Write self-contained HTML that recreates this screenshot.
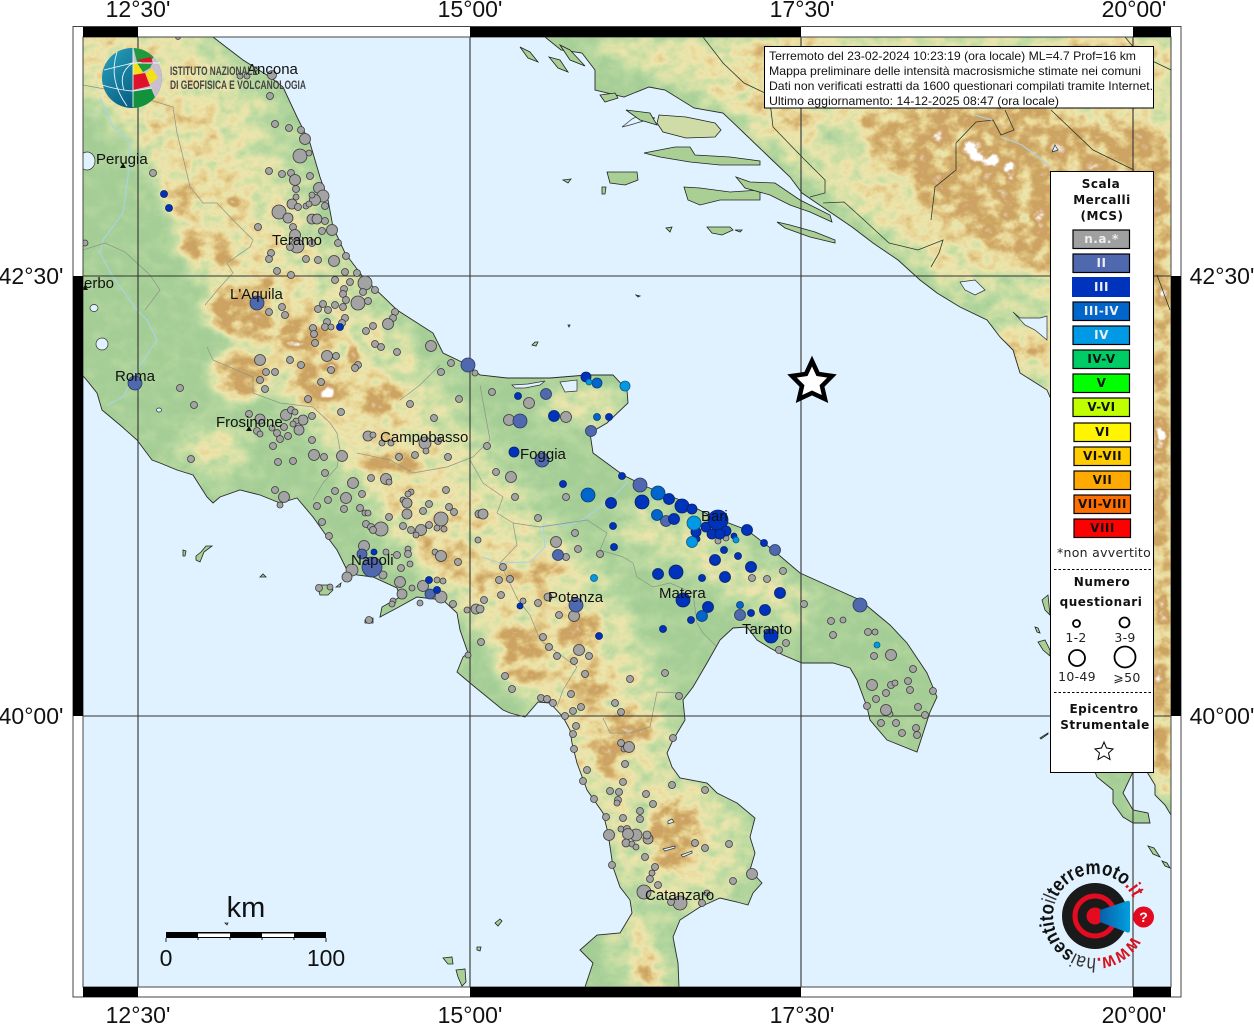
<!DOCTYPE html>
<html lang="it"><head><meta charset="utf-8"><title>Mappa intensità macrosismiche</title>
<style>html,body{margin:0;padding:0;background:#fff}svg{display:block}
.city{font:15px "Liberation Sans",sans-serif;fill:#111}
.ax{font:23px "Liberation Sans",sans-serif;fill:#111;text-anchor:middle}
.info{font:12px "Liberation Sans",sans-serif;fill:#111}
.lb{font:bold 12px "DejaVu Sans",sans-serif;fill:#111;text-anchor:middle;letter-spacing:.5px}
.lr{font:12.5px "DejaVu Sans",sans-serif;fill:#222;text-anchor:middle;letter-spacing:.3px}
.sw{stroke:#000;stroke-width:1.2}
.g circle{fill:#a3a3a3;stroke:#3c3c3c;stroke-width:.8}
.d2 circle{fill:#4f68ae;stroke:#2c3a60;stroke-width:.8}
.d3 circle{fill:#0033bb;stroke:#0b1f66;stroke-width:.8}
.d34 circle{fill:#0066cc;stroke:#103a70;stroke-width:.8}
.d4 circle{fill:#0099e6;stroke:#10587f;stroke-width:.8}
.rg{fill:none;stroke:#8b9686;stroke-width:.7}
.nb{fill:none;stroke:#2b3a2b;stroke-width:.8}
.rv{fill:none;stroke:#a8d3e6;stroke-width:1.1}
.lk{fill:#e0f2ff;stroke:#333;stroke-width:.7}
.il{fill:#a9cf95;stroke:#222;stroke-width:.8}
</style></head><body>
<svg width="1254" height="1024" viewBox="0 0 1254 1024" xmlns="http://www.w3.org/2000/svg">
<defs>
<clipPath id="mapc"><rect x="83" y="37" width="1088" height="950"/></clipPath>
<clipPath id="globe"><circle cx="132" cy="78" r="30"/></clipPath>
<clipPath id="land">
<path id="it" d="M83 37L213 37L243 60L270 77L283 87L297 117L310 143L320 177L328 200L333 227L345 253L363 277L397 310L433 333L443 353L468 365L480 375L507 378L550 378L587 375L613 375L627 390L628 403L607 423L590 433L593 453L623 475L647 487L680 500L713 517L747 530L773 550L800 573L820 582L860 600L890 625L907 643L927 673L937 697L930 712L917 752L887 740L870 720L867 707L857 680L850 668L833 663L802 663L783 655L770 648L757 640L747 627L733 628L720 640L707 663L693 687L683 700L685 720L673 740L667 753L672 767L680 778L707 783L717 793L737 803L755 818L750 837L755 853L750 870L762 883L753 893L748 905L737 902L720 898L700 907L680 920L673 937L678 963L679 987L585 987L593 963L580 950L597 935L620 933L632 913L630 900L620 887L613 867L608 833L603 813L587 790L577 763L572 743L570 730L563 717L550 703L538 702L525 717L510 713L503 710L470 683L457 672L463 657L468 653L460 630L457 613L443 600L417 597L397 608L380 617L382 607L400 597L397 588L373 577L357 575L347 570L337 550L328 538L313 517L297 498L280 503L260 495L240 490L220 497L213 503L207 497L193 475L177 470L160 463L152 460L137 440L120 425L102 410L97 393L85 378L83 376Z"/>
<path id="hr" d="M545 37L561 50L582 53L595 70L595 90L624 97L649 87L665 90L694 108L723 113L744 133L769 157L790 177L802 193L827 210L852 227L873 243L898 260L920 280L937 293L960 307L987 320L1000 337L1013 350L1020 373L1047 390L1060 420L1153 600L1147 772L1155 785L1155 795L1165 805L1171 815L1171 37Z"/>
<path id="cf" d="M1095 772L1133 772L1123 793L1133 810L1148 813L1150 823L1133 823L1123 817L1113 803L1113 790L1097 777Z"/>
</clipPath>
<filter id="b14" x="-20%" y="-20%" width="140%" height="140%" color-interpolation-filters="sRGB"><feGaussianBlur stdDeviation="14"/></filter>
<filter id="b5" x="-30%" y="-30%" width="160%" height="160%" color-interpolation-filters="sRGB"><feGaussianBlur stdDeviation="6"/></filter>
<filter id="b2" x="-60%" y="-60%" width="220%" height="220%" color-interpolation-filters="sRGB"><feGaussianBlur stdDeviation="3"/></filter>
<filter id="hyp" filterUnits="userSpaceOnUse" x="83" y="37" width="1088" height="950" color-interpolation-filters="sRGB">
<feTurbulence type="fractalNoise" baseFrequency="0.06 0.07" numOctaves="4" seed="11" result="t"/>
<feColorMatrix in="t" type="matrix" values="1 0 0 0 0 1 0 0 0 0 1 0 0 0 0 0 0 0 0 1" result="n"/>
<feComposite in="SourceGraphic" in2="n" operator="arithmetic" k1="1.1" k2=".42" k3=".08" k4="-.04" result="h"/>
<feComponentTransfer in="h">
<feFuncR type="table" tableValues=".63 .65 .72 .83 .93 .91 .85 .80 .81 .88 1"/>
<feFuncG type="table" tableValues=".80 .81 .85 .88 .90 .83 .72 .64 .64 .77 1"/>
<feFuncB type="table" tableValues=".58 .59 .63 .65 .68 .58 .46 .38 .40 .62 1"/>
<feFuncA type="linear" slope="0" intercept="1"/>
</feComponentTransfer>
</filter>
<linearGradient id="gb" x1="0" y1="0" x2="1" y2="1"><stop offset="0" stop-color="#2aa3bf"/><stop offset=".6" stop-color="#0d6a8f"/><stop offset="1" stop-color="#084560"/></linearGradient>
<linearGradient id="cone" x1="0" y1="0" x2="1" y2="0"><stop offset="0" stop-color="#0b5ea8"/><stop offset="1" stop-color="#00a0e0"/></linearGradient>
<path id="arc" d="M1132 936A42 42 0 1 1 1133 898"/>
</defs>

<rect x="83" y="37" width="1088" height="950" fill="#e0f2ff"/>
<g clip-path="url(#mapc)">
<g clip-path="url(#land)">
<g filter="url(#hyp)">
<rect x="83" y="37" width="1088" height="950" fill="#1c1c1c"/>
<g filter="url(#b14)" fill="none" stroke-linecap="round" stroke-linejoin="round">
<polyline stroke="#565656" stroke-width="130" points="60,20 150,60 230,160 270,270 340,350 400,440 470,530 560,620 600,700 620,790 690,850"/>
<polyline stroke="#707070" stroke-width="80" points="110,50 190,140 230,240 290,340 370,430 440,520 510,600 580,680 605,740"/>
<polyline stroke="#5a5a5a" stroke-width="45" points="640,530 700,550 790,605"/>
<polyline stroke="#666" stroke-width="40" points="630,925 650,985"/>
<path fill="#707070" stroke="none" d="M570 37L1171 37L1171 830L1150 770L1070 420L1000 340L930 270L840 200L770 145L690 85L620 60Z"/>
<ellipse cx="582" cy="408" rx="44" ry="14" fill="#7a7a7a" stroke="none"/>
<ellipse cx="110" cy="70" rx="35" ry="28" fill="#6c6c6c" stroke="none"/>
<ellipse cx="290" cy="130" rx="28" ry="35" fill="#2c2c2c" stroke="none"/>
<ellipse cx="215" cy="450" rx="35" ry="22" fill="#6c6c6c" stroke="none"/>
<ellipse cx="1005" cy="300" rx="48" ry="24" fill="#383838" stroke="none"/>
<ellipse cx="838" cy="140" rx="24" ry="22" fill="#303030" stroke="none"/>
</g>
<g filter="url(#b5)" fill="#a8a8a8">
<ellipse cx="205" cy="250" rx="30" ry="13" transform="rotate(20 205 250)"/>
<ellipse cx="178" cy="200" rx="10" ry="28" transform="rotate(-20 178 200)"/>
<ellipse cx="240" cy="312" rx="36" ry="24"/>
<ellipse cx="240" cy="375" rx="28" ry="26"/>
<ellipse cx="320" cy="385" rx="30" ry="22"/>
<ellipse cx="300" cy="335" rx="36" ry="16"/>
<ellipse cx="382" cy="398" rx="20" ry="18"/>
<ellipse cx="390" cy="462" rx="30" ry="11" transform="rotate(15 390 462)"/>
<ellipse cx="445" cy="556" rx="26" ry="11" transform="rotate(25 445 556)"/>
<ellipse cx="487" cy="580" rx="10" ry="14"/>
<ellipse cx="540" cy="572" rx="32" ry="8"/>
<ellipse cx="588" cy="630" rx="13" ry="18"/>
<ellipse cx="518" cy="638" rx="20" ry="15"/>
<ellipse cx="522" cy="665" rx="24" ry="18"/>
<ellipse cx="567" cy="632" rx="16" ry="16"/>
<ellipse cx="587" cy="688" rx="20" ry="16"/>
<ellipse cx="628" cy="725" rx="30" ry="14"/>
<ellipse cx="608" cy="753" rx="14" ry="24"/>
<ellipse cx="675" cy="835" rx="27" ry="36"/>
<ellipse cx="648" cy="968" rx="12" ry="17"/>
<path d="M850 110L900 120L950 60L1020 60L1060 120L1171 130L1171 280L1050 275L985 240L935 215L900 175Z" fill="#a6a6a6"/>
<path d="M1153 170L1171 170L1171 800L1153 770Z" fill="#a8a8a8"/>
<ellipse cx="1105" cy="60" rx="70" ry="18" fill="#a0a0a0"/>
<ellipse cx="900" cy="70" rx="30" ry="20" fill="#949494"/>
<ellipse cx="1018" cy="350" rx="25" ry="14" fill="#909090"/>
<ellipse cx="800" cy="50" rx="45" ry="10" fill="#8a8a8a"/>
<ellipse cx="790" cy="115" rx="28" ry="14" fill="#888"/>
</g>
<g filter="url(#b2)" fill="#f4f4f4">
<ellipse cx="233" cy="200" rx="3" ry="8"/>
<ellipse cx="267" cy="283" rx="9" ry="3.500"/>
<ellipse cx="353" cy="352" rx="5" ry="10"/>
<ellipse cx="295" cy="343" rx="10" ry="3"/>
<ellipse cx="328" cy="392" rx="6" ry="6"/>
<ellipse cx="330" cy="368" rx="5" ry="5"/>
<ellipse cx="628" cy="730" rx="7" ry="3"/>
<ellipse cx="985" cy="155" rx="15" ry="11"/>
<ellipse cx="965" cy="145" rx="7" ry="7"/>
<ellipse cx="1008" cy="172" rx="7" ry="10"/>
<ellipse cx="1040" cy="215" rx="8" ry="6"/>
<ellipse cx="1161" cy="440" rx="5" ry="22"/>
<ellipse cx="1163" cy="300" rx="4" ry="10"/>
<ellipse cx="1163" cy="610" rx="4" ry="12"/>
<ellipse cx="1160" cy="680" rx="4" ry="8"/>
</g>
</g>
<g>
<polyline class="nb" points="703,37 723,63 744,83 765,93 771,110 773,127 802,157 825,180 825,193 810,197"/>
<polyline class="nb" points="823,203 844,202 864,220 889,243 918,250 943,240 939,253 931,267"/>
<polyline class="nb" points="931,220 935,187 956,170 956,143 976,122 993,120 1001,135 1014,130 1005,110"/>
<polyline class="nb" points="1051,110 1093,150 1134,170"/>
<polyline class="nb" points="1125,37 1140,55 1171,70"/>
<polyline class="nb" points="1157,275 1170,310"/>
<polyline class="rv" points="1001,137 1022,145 1051,167"/>
<polyline class="rv" points="975,115 992,120"/>
<polyline class="rv" points="100,97 113,127 130,143 128,177 123,213 103,240 100,253 113,277 137,310 147,320 157,340 137,370 123,397 107,405"/>
<polyline class="rv" points="628,482 613,497 587,517 570,525 543,525 545,547 530,562 500,563 482,557"/>
<polyline class="rg" points="150,100 173,107 177,133 183,157 190,187 203,203 217,203 233,220 253,240 250,247 227,263 233,273 220,287 205,305"/>
<polyline class="rg" points="83,85 110,90 133,103 150,100"/>
<polyline class="rg" points="83,250 105,243 125,252 150,275 160,290 145,310"/>
<polyline class="rg" points="207,347 213,360 253,377 253,393 280,403 313,407 330,423 337,433 340,450 337,467 323,483 313,500"/>
<polyline class="rg" points="357,453 390,460 413,473 447,467 473,457 490,440 480,385"/>
<polyline class="rg" points="400,400 420,385 440,365"/>
<polyline class="rg" points="483,483 503,497 497,513 513,523 540,527 587,520 607,533 600,550 623,557 633,563 637,577 653,587 670,583 693,593 697,623 703,633 717,647"/>
<polyline class="rg" points="483,483 470,460"/>
<polyline class="rg" points="513,523 517,545 500,563 518,600 530,615 540,640 577,667 563,690 557,707"/>
<polyline class="rg" points="603,718 610,733 630,733 650,727 657,692 680,693"/>
</g>
</g>
<g fill="none" stroke="#2a2a2a" stroke-width=".9">
<use href="#it"/><use href="#hr"/><use href="#cf"/>
</g>
<ellipse class="lk" cx="87" cy="161" rx="8" ry="9"/>
<ellipse class="lk" cx="94" cy="308" rx="4" ry="3.5"/>
<ellipse class="lk" cx="102" cy="344" rx="6" ry="6"/>
<ellipse class="lk" cx="159" cy="410" rx="2.5" ry="2"/>
<path class="lk" d="M512 385L528 384L545 381L540 385L525 388L515 388Z"/>
<path class="lk" d="M560 382L577 380L577 391L565 392Z"/>
<path class="lk" d="M668 821L672 819L674 822L668 824Z"/>
<path class="lk" d="M663 849L675 846L675 848L665 851Z"/>
<path class="lk" d="M681 855L692 851L692 853L683 857Z"/>
<path class="lk" d="M622 127L632 119L640 115L655 118L640 122L630 125Z"/>
<path class="lk" d="M1013 312L1020 318L1040 318L1047 316L1047 340L1035 330L1025 325Z"/>
<path class="lk" d="M960 282L975 280L985 290L975 295L965 290Z"/>
<path class="lk" d="M1055 145L1058 150L1052 152Z"/>
<!-- islands -->
<g class="il">
<path d="M659 115L686 117L715 123L721 130L715 137L686 138L663 132L657 123Z" fill="#cfdca8"/>
<path d="M626 110L650 113L657 125L640 120Z"/>
<path d="M644 153L675 147L690 147L695 155L730 157L760 161L760 165L720 165L690 162L660 157Z"/>
<path d="M607 172L637 172L638 180L625 185L610 183Z"/>
<path d="M684 187L700 188L730 192L760 190L760 200L720 200L700 205L688 200Z"/>
<path d="M736 177L750 182L775 183L800 200L830 215L832 222L810 212L790 205L770 195L745 188Z"/>
<path d="M777 222L790 225L815 232L835 240L835 243L810 237L785 228Z"/>
<path d="M707 227L730 227L733 230L722 235L712 233Z"/>
<path d="M666 228L672 227L670 232Z"/>
<path d="M563 180L571 179L568 183Z"/>
<path d="M602 187L606 187L605 194L602 194Z"/>
<path d="M520 47L530 52L538 62L528 58Z"/>
<path d="M549 57L560 60L568 72L558 68Z"/>
<path d="M560 45L570 50L585 66L570 60Z"/>
<path d="M600 95L615 93L618 98L605 102Z"/>
<path d="M735 230L742 230L740 232Z"/>
<path d="M1042 600L1048 595L1050 615L1045 610Z"/>
<path d="M1035 627L1038 628L1040 633L1037 632Z"/>
<path d="M1038 642L1045 640L1050 650L1050 656L1043 650Z"/>
<path d="M1040 738L1048 733L1048 734L1041 739Z"/>
<path d="M1148 846L1154 848L1160 857L1153 854Z"/>
<path d="M1162 861L1167 863L1170 868L1165 866Z"/>
<path d="M317 585L330 585L333 590L328 595L320 595Z"/>
<path d="M336 587L341 583L340 587Z"/>
<path d="M365 620L373 618L373 623L365 623Z"/>
<path d="M196 556L201 552L206 546L212 546L204 552L200 562L196 560Z"/>
<path d="M183 550L186 551L185 556L183 556Z"/>
<path d="M260 577L263 574L266 577Z"/>
<path d="M495 923L500 919L502 921L498 926Z"/>
<path d="M477 947L481 947L480 951L477 950Z"/>
<path d="M443 958L452 957L453 964L448 964Z"/>
<path d="M456 970L465 969L466 982L462 986L458 977Z"/>
<path d="M532 345L535 342L538 342L536 346Z"/>
<path d="M636 295L640 296L638 297Z"/>
<path d="M568 325L570 325L569 327Z"/>
<path d="M225 923L228 923L227 925Z"/>
</g>
<!-- grid -->
<g stroke="#333" stroke-width="1.1" fill="none">
<path d="M138 37V987M470 37V987M801 37V987M1133 37V987M83 276H1171M83 716H1171"/>
</g>
<!-- city triangles -->
<g fill="#111">
<path d="M272 72l3 5h-6z"/><path d="M123 163l3 5h-6z"/><path d="M297 243l3 5h-6z"/><path d="M257 298l3 5h-6z"/><path d="M85 285l3 5h-6z"/><path d="M135 381l3 5h-6z"/><path d="M249 426l3 5h-6z"/><path d="M425 441l3 5h-6z"/><path d="M542 457l3 5h-6z"/><path d="M715 518l3 5h-6z"/><path d="M372 563l3 5h-6z"/><path d="M576 603l3 5h-6z"/><path d="M683 597l3 5h-6z"/><path d="M771 633l3 5h-6z"/><path d="M680 899l3 5h-6z"/>
</g>
<!-- gray dots -->
<g class="g">
<circle cx="178" cy="37" r="2.5"/><circle cx="240" cy="76" r="3"/><circle cx="247" cy="76" r="3"/><circle cx="272" cy="75" r="4.5"/><circle cx="270" cy="96" r="3.5"/><circle cx="275" cy="124" r="3.5"/><circle cx="289" cy="128" r="3.5"/><circle cx="301" cy="130" r="3.5"/><circle cx="305" cy="139" r="5.5"/><circle cx="300" cy="156" r="7"/><circle cx="309" cy="153" r="3"/><circle cx="153" cy="173" r="3.5"/><circle cx="269" cy="171" r="3.5"/><circle cx="282" cy="174" r="3.5"/><circle cx="291" cy="173" r="3.5"/><circle cx="295" cy="180" r="5.5"/><circle cx="310" cy="176" r="3.5"/><circle cx="296" cy="189" r="3.5"/><circle cx="319" cy="188" r="5.5"/><circle cx="323" cy="196" r="6"/><circle cx="315" cy="200" r="5.5"/><circle cx="312" cy="195" r="3"/><circle cx="296" cy="197" r="3"/><circle cx="292" cy="204" r="5"/><circle cx="298" cy="207" r="3.5"/><circle cx="306" cy="206" r="3"/><circle cx="309" cy="204" r="3"/><circle cx="325" cy="206" r="3.5"/><circle cx="279" cy="212" r="7"/><circle cx="288" cy="218" r="5"/><circle cx="312" cy="219" r="5"/><circle cx="317" cy="219" r="5"/><circle cx="325" cy="221" r="3.5"/><circle cx="258" cy="227" r="3.5"/><circle cx="293" cy="227" r="3.5"/><circle cx="322" cy="231" r="3.5"/><circle cx="332" cy="230" r="5.5"/><circle cx="295" cy="235" r="5.5"/><circle cx="338" cy="243" r="3.5"/><circle cx="312" cy="243" r="3.5"/><circle cx="297" cy="246" r="7"/><circle cx="290" cy="247" r="3.5"/><circle cx="271" cy="253" r="3.5"/><circle cx="269" cy="259" r="3.5"/><circle cx="306" cy="259" r="3.5"/><circle cx="318" cy="260" r="3.5"/><circle cx="334" cy="261" r="5.5"/><circle cx="346" cy="256" r="3.5"/><circle cx="277" cy="271" r="3.5"/><circle cx="291" cy="275" r="3.5"/><circle cx="345" cy="272" r="3.5"/><circle cx="357" cy="273" r="3.5"/><circle cx="365" cy="283" r="7"/><circle cx="335" cy="280" r="3.5"/><circle cx="350" cy="282" r="3.5"/><circle cx="344" cy="289" r="3.5"/><circle cx="363" cy="292" r="3.5"/><circle cx="343" cy="294" r="3.5"/><circle cx="375" cy="290" r="3.5"/><circle cx="346" cy="300" r="3.5"/><circle cx="358" cy="303" r="7"/><circle cx="368" cy="301" r="3.5"/><circle cx="323" cy="304" r="3.5"/><circle cx="335" cy="305" r="3.5"/><circle cx="343" cy="307" r="3.5"/><circle cx="318" cy="309" r="3.5"/><circle cx="328" cy="310" r="3.5"/><circle cx="282" cy="307" r="3.5"/><circle cx="269" cy="312" r="3.5"/><circle cx="285" cy="315" r="3.5"/><circle cx="345" cy="318" r="3.5"/><circle cx="395" cy="312" r="3.5"/><circle cx="393" cy="318" r="3.5"/><circle cx="388" cy="324" r="5.5"/><circle cx="373" cy="326" r="3.5"/><circle cx="366" cy="331" r="3.5"/><circle cx="327" cy="322" r="3.5"/><circle cx="342" cy="323" r="3.5"/><circle cx="325" cy="327" r="3.5"/><circle cx="331" cy="327" r="3"/><circle cx="313" cy="328" r="3.5"/><circle cx="314" cy="334" r="3.5"/><circle cx="85" cy="243" r="3"/>
<circle cx="260" cy="360" r="5.5"/><circle cx="290" cy="360" r="3.5"/><circle cx="301" cy="365" r="3.5"/><circle cx="266" cy="372" r="3.5"/><circle cx="275" cy="372" r="3.5"/><circle cx="327" cy="356" r="5.5"/><circle cx="336" cy="356" r="3.5"/><circle cx="315" cy="343" r="3.5"/><circle cx="375" cy="344" r="3.5"/><circle cx="381" cy="347" r="3.5"/><circle cx="397" cy="352" r="3.5"/><circle cx="431" cy="346" r="5.5"/><circle cx="451" cy="363" r="3.5"/><circle cx="441" cy="372" r="3.5"/><circle cx="475" cy="373" r="3"/><circle cx="358" cy="365" r="3.5"/><circle cx="355" cy="368" r="3.5"/><circle cx="331" cy="370" r="3.5"/><circle cx="260" cy="380" r="3.5"/><circle cx="321" cy="382" r="3.5"/><circle cx="265" cy="389" r="3.5"/><circle cx="180" cy="388" r="3.5"/><circle cx="308" cy="399" r="3.5"/><circle cx="459" cy="399" r="3.5"/><circle cx="410" cy="404" r="3.5"/><circle cx="194" cy="405" r="3.5"/><circle cx="341" cy="412" r="3.5"/><circle cx="249" cy="414" r="3.5"/><circle cx="434" cy="418" r="3.5"/><circle cx="286" cy="415" r="5.5"/><circle cx="291" cy="410" r="3.5"/><circle cx="295" cy="412" r="3"/><circle cx="312" cy="416" r="3.5"/><circle cx="303" cy="420" r="5"/><circle cx="296" cy="421" r="3"/><circle cx="260" cy="419" r="5"/><circle cx="293" cy="424" r="3"/><circle cx="284" cy="427" r="3.5"/><circle cx="299" cy="430" r="5"/><circle cx="272" cy="428" r="3"/><circle cx="257" cy="431" r="3.5"/><circle cx="277" cy="433" r="3.5"/><circle cx="260" cy="434" r="3"/><circle cx="288" cy="436" r="3.5"/><circle cx="280" cy="439" r="3.5"/><circle cx="312" cy="440" r="3.5"/><circle cx="273" cy="446" r="3.5"/><circle cx="368" cy="436" r="5"/><circle cx="373" cy="435" r="3"/><circle cx="382" cy="443" r="3"/><circle cx="391" cy="443" r="3"/><circle cx="425" cy="443" r="6"/><circle cx="438" cy="441" r="3.5"/><circle cx="426" cy="451" r="3"/><circle cx="415" cy="455" r="3.5"/><circle cx="448" cy="457" r="3.5"/><circle cx="399" cy="457" r="3.5"/><circle cx="314" cy="455" r="5.5"/><circle cx="324" cy="457" r="3.5"/><circle cx="342" cy="456" r="5.5"/><circle cx="278" cy="462" r="3.5"/><circle cx="293" cy="461" r="3.5"/><circle cx="191" cy="459" r="3.5"/><circle cx="325" cy="473" r="3.5"/><circle cx="371" cy="478" r="3.5"/><circle cx="353" cy="483" r="5.5"/><circle cx="386" cy="479" r="5.5"/><circle cx="389" cy="482" r="3"/><circle cx="275" cy="490" r="3.5"/><circle cx="335" cy="491" r="3.5"/><circle cx="446" cy="490" r="3.5"/><circle cx="362" cy="494" r="3.5"/><circle cx="411" cy="492" r="3"/><circle cx="408" cy="494" r="3"/><circle cx="284" cy="497" r="5.5"/><circle cx="346" cy="498" r="5.5"/><circle cx="328" cy="500" r="3.5"/><circle cx="403" cy="500" r="3"/><circle cx="407" cy="503" r="5"/><circle cx="429" cy="504" r="3.5"/><circle cx="280" cy="505" r="3"/><circle cx="317" cy="506" r="3.5"/><circle cx="344" cy="509" r="3.5"/><circle cx="360" cy="508" r="3.5"/><circle cx="365" cy="513" r="3"/><circle cx="368" cy="513" r="3"/><circle cx="449" cy="507" r="3.5"/><circle cx="454" cy="512" r="3.5"/><circle cx="423" cy="511" r="3.5"/><circle cx="407" cy="514" r="5"/><circle cx="389" cy="517" r="3.5"/><circle cx="479" cy="514" r="4"/><circle cx="441" cy="519" r="7"/><circle cx="322" cy="522" r="3.5"/><circle cx="366" cy="524" r="3.5"/><circle cx="371" cy="527" r="3.5"/><circle cx="381" cy="529" r="7"/><circle cx="373" cy="530" r="3.5"/><circle cx="403" cy="526" r="3.5"/><circle cx="429" cy="525" r="3.5"/><circle cx="437" cy="528" r="3"/><circle cx="444" cy="529" r="3"/><circle cx="411" cy="530" r="3.5"/><circle cx="421" cy="530" r="5.5"/><circle cx="416" cy="535" r="3"/><circle cx="329" cy="536" r="3.5"/><circle cx="478" cy="540" r="3"/><circle cx="364" cy="546" r="5.5"/><circle cx="408" cy="549" r="3"/><circle cx="408" cy="554" r="3.5"/><circle cx="397" cy="555" r="3.5"/><circle cx="435" cy="552" r="3"/><circle cx="441" cy="556" r="5.5"/><circle cx="386" cy="552" r="3"/><circle cx="458" cy="562" r="3.5"/><circle cx="410" cy="564" r="3"/><circle cx="401" cy="568" r="3.5"/><circle cx="352" cy="570" r="6"/><circle cx="347" cy="577" r="5"/><circle cx="383" cy="575" r="4"/><circle cx="400" cy="582" r="5.5"/><circle cx="423" cy="586" r="5.5"/><circle cx="412" cy="588" r="3"/><circle cx="437" cy="580" r="3"/><circle cx="443" cy="581" r="3"/><circle cx="402" cy="594" r="5"/><circle cx="441" cy="597" r="6"/><circle cx="393" cy="601" r="3"/><circle cx="392" cy="604" r="3"/><circle cx="420" cy="603" r="3"/><circle cx="453" cy="604" r="3.5"/><circle cx="467" cy="610" r="3"/><circle cx="476" cy="609" r="5"/><circle cx="319" cy="588" r="3.5"/><circle cx="330" cy="587" r="3"/><circle cx="369" cy="620" r="3.5"/><circle cx="468" cy="655" r="3"/>
<circle cx="492" cy="392" r="3.5"/><circle cx="529" cy="403" r="5.5"/><circle cx="566" cy="417" r="5.5"/><circle cx="509" cy="420" r="5.5"/><circle cx="487" cy="446" r="3.5"/><circle cx="496" cy="472" r="3.5"/><circle cx="511" cy="477" r="5.5"/><circle cx="566" cy="497" r="3.5"/><circle cx="515" cy="497" r="3.5"/><circle cx="483" cy="514" r="5"/><circle cx="538" cy="518" r="3.5"/><circle cx="575" cy="533" r="3.5"/><circle cx="718" cy="541" r="3"/><circle cx="726" cy="538" r="3"/><circle cx="556" cy="542" r="5.5"/><circle cx="578" cy="549" r="3.5"/><circle cx="566" cy="557" r="3.5"/><circle cx="600" cy="554" r="3.5"/><circle cx="783" cy="571" r="3.5"/><circle cx="503" cy="567" r="3.5"/><circle cx="752" cy="578" r="3.5"/><circle cx="767" cy="579" r="3.5"/><circle cx="499" cy="580" r="3.5"/><circle cx="510" cy="579" r="3.5"/><circle cx="484" cy="600" r="3.5"/><circle cx="501" cy="595" r="3.5"/><circle cx="523" cy="601" r="3"/><circle cx="538" cy="603" r="3.5"/><circle cx="548" cy="597" r="4"/><circle cx="804" cy="604" r="3.5"/><circle cx="559" cy="615" r="3.5"/><circle cx="574" cy="616" r="5.5"/><circle cx="543" cy="637" r="3.5"/><circle cx="786" cy="643" r="3.5"/><circle cx="779" cy="650" r="3.5"/><circle cx="549" cy="647" r="3.5"/><circle cx="579" cy="650" r="5.5"/><circle cx="557" cy="656" r="3.5"/><circle cx="589" cy="656" r="3.5"/><circle cx="481" cy="642" r="3.5"/><circle cx="480" cy="609" r="4"/>
<circle cx="574" cy="661" r="3.5"/><circle cx="585" cy="674" r="3.5"/><circle cx="505" cy="676" r="3.5"/><circle cx="512" cy="689" r="3.5"/><circle cx="630" cy="679" r="3.5"/><circle cx="665" cy="673" r="3.5"/><circle cx="571" cy="694" r="3.5"/><circle cx="679" cy="696" r="3.5"/><circle cx="541" cy="698" r="3.5"/><circle cx="547" cy="699" r="3.5"/><circle cx="553" cy="703" r="3.5"/><circle cx="615" cy="703" r="3.5"/><circle cx="581" cy="707" r="3.5"/><circle cx="573" cy="711" r="3.5"/><circle cx="621" cy="712" r="3.5"/><circle cx="565" cy="716" r="3.5"/><circle cx="576" cy="726" r="3.5"/><circle cx="573" cy="734" r="3.5"/><circle cx="673" cy="738" r="3.5"/><circle cx="621" cy="743" r="3.5"/><circle cx="624" cy="749" r="3"/><circle cx="629" cy="747" r="5.5"/><circle cx="574" cy="749" r="3.5"/><circle cx="625" cy="764" r="3.5"/><circle cx="587" cy="770" r="3.5"/><circle cx="583" cy="781" r="3.5"/><circle cx="623" cy="782" r="3.5"/><circle cx="672" cy="785" r="3.5"/><circle cx="705" cy="790" r="3.5"/><circle cx="610" cy="791" r="3.5"/><circle cx="619" cy="792" r="3.5"/><circle cx="646" cy="794" r="3.5"/><circle cx="594" cy="799" r="3.5"/><circle cx="618" cy="800" r="3.5"/><circle cx="617" cy="803" r="3"/><circle cx="653" cy="804" r="3.5"/><circle cx="640" cy="811" r="3.5"/><circle cx="606" cy="817" r="3.5"/><circle cx="623" cy="818" r="3.5"/><circle cx="640" cy="819" r="3.5"/><circle cx="621" cy="829" r="3"/><circle cx="627" cy="829" r="3.5"/><circle cx="609" cy="835" r="5.5"/><circle cx="636" cy="835" r="6"/><circle cx="628" cy="834" r="5.5"/><circle cx="648" cy="839" r="5"/><circle cx="647" cy="835" r="4"/><circle cx="626" cy="843" r="4"/><circle cx="632" cy="844" r="3"/><circle cx="636" cy="847" r="3"/><circle cx="695" cy="843" r="3.5"/><circle cx="705" cy="848" r="3.5"/><circle cx="729" cy="844" r="3.5"/><circle cx="645" cy="857" r="3.5"/><circle cx="612" cy="865" r="3.5"/><circle cx="655" cy="867" r="3.5"/><circle cx="652" cy="873" r="3"/><circle cx="752" cy="874" r="5.5"/><circle cx="650" cy="879" r="3.5"/><circle cx="733" cy="881" r="3.5"/><circle cx="658" cy="885" r="3.5"/><circle cx="644" cy="892" r="7"/><circle cx="707" cy="893" r="3"/><circle cx="680" cy="903" r="7"/><circle cx="671" cy="902" r="3.5"/><circle cx="702" cy="903" r="3.5"/>
<circle cx="831" cy="621" r="3.5"/><circle cx="843" cy="620" r="3"/><circle cx="833" cy="635" r="3.5"/><circle cx="868" cy="632" r="3.5"/><circle cx="875" cy="632" r="3"/><circle cx="874" cy="656" r="3.5"/><circle cx="891" cy="655" r="5.5"/><circle cx="913" cy="669" r="3.5"/><circle cx="908" cy="681" r="3.5"/><circle cx="872" cy="685" r="5.5"/><circle cx="891" cy="685" r="3.5"/><circle cx="895" cy="683" r="3"/><circle cx="910" cy="690" r="3.5"/><circle cx="933" cy="691" r="3.5"/><circle cx="886" cy="693" r="3.5"/><circle cx="876" cy="699" r="3.5"/><circle cx="918" cy="707" r="3.5"/><circle cx="867" cy="706" r="3.5"/><circle cx="890" cy="714" r="3"/><circle cx="886" cy="710" r="5.5"/><circle cx="925" cy="715" r="3.5"/><circle cx="881" cy="723" r="3.5"/><circle cx="896" cy="723" r="3.5"/><circle cx="916" cy="728" r="3.5"/><circle cx="902" cy="733" r="3.5"/><circle cx="917" cy="735" r="3.5"/>
</g>
<g class="d2"><circle cx="257" cy="303" r="7"/><circle cx="135" cy="383" r="7"/><circle cx="468" cy="365" r="7"/><circle cx="362" cy="554" r="5"/><circle cx="372" cy="567" r="10"/><circle cx="430" cy="594" r="5"/><circle cx="546" cy="394" r="5.5"/><circle cx="520" cy="421" r="7"/><circle cx="591" cy="431" r="5.5"/><circle cx="542" cy="460" r="7"/><circle cx="640" cy="485" r="7"/><circle cx="666" cy="521" r="5.5"/><circle cx="775" cy="550" r="5.5"/><circle cx="558" cy="555" r="5.5"/><circle cx="576" cy="605" r="7"/><circle cx="740" cy="615" r="5.5"/><circle cx="860" cy="605" r="7"/></g>
<g class="d3"><circle cx="164" cy="194" r="3.5"/><circle cx="169" cy="208" r="3.5"/><circle cx="340" cy="327" r="3.5"/><circle cx="374" cy="552" r="3"/><circle cx="429" cy="580" r="3.5"/><circle cx="437" cy="590" r="3.5"/><circle cx="586" cy="377" r="5"/><circle cx="518" cy="396" r="3.5"/><circle cx="554" cy="416" r="5.5"/><circle cx="609" cy="417" r="3.5"/><circle cx="514" cy="452" r="5"/><circle cx="622" cy="476" r="3.5"/><circle cx="563" cy="484" r="3.5"/><circle cx="669" cy="499" r="5.5"/><circle cx="682" cy="506" r="7"/><circle cx="692" cy="509" r="5"/><circle cx="642" cy="502" r="7"/><circle cx="611" cy="503" r="5.5"/><circle cx="674" cy="519" r="5.5"/><circle cx="613" cy="526" r="3.5"/><circle cx="697" cy="539" r="3"/><circle cx="696" cy="532" r="5"/><circle cx="706" cy="527" r="5"/><circle cx="718" cy="520" r="10"/><circle cx="712" cy="534" r="5"/><circle cx="726" cy="531" r="5"/><circle cx="720" cy="534" r="5"/><circle cx="734" cy="536" r="3"/><circle cx="747" cy="530" r="5.5"/><circle cx="764" cy="543" r="3.5"/><circle cx="614" cy="547" r="3.5"/><circle cx="724" cy="550" r="3.5"/><circle cx="738" cy="556" r="3.5"/><circle cx="715" cy="560" r="5.5"/><circle cx="751" cy="567" r="5.5"/><circle cx="676" cy="572" r="7"/><circle cx="658" cy="574" r="5.5"/><circle cx="702" cy="578" r="3.5"/><circle cx="725" cy="577" r="5.5"/><circle cx="780" cy="593" r="5.5"/><circle cx="520" cy="606" r="3"/><circle cx="683" cy="600" r="7"/><circle cx="708" cy="607" r="5.5"/><circle cx="751" cy="613" r="3.5"/><circle cx="765" cy="610" r="5.5"/><circle cx="691" cy="620" r="3.5"/><circle cx="663" cy="629" r="3.5"/><circle cx="599" cy="636" r="3.5"/><circle cx="771" cy="636" r="7"/></g>
<g class="d34"><circle cx="597" cy="383" r="5"/><circle cx="597" cy="417" r="3.5"/><circle cx="658" cy="493" r="7"/><circle cx="588" cy="495" r="7"/><circle cx="657" cy="515" r="5.5"/><circle cx="740" cy="605" r="3.5"/><circle cx="702" cy="616" r="5.5"/></g>
<g class="d4"><circle cx="589" cy="382" r="3"/><circle cx="625" cy="386" r="5"/><circle cx="694" cy="523" r="7"/><circle cx="736" cy="540" r="3"/><circle cx="692" cy="542" r="5.5"/><circle cx="594" cy="578" r="3.5"/><circle cx="877" cy="645" r="3"/></g>
<!-- city labels -->
<text class="city" x="247" y="74">Ancona</text><text class="city" x="96" y="164">Perugia</text><text class="city" x="272" y="245">Teramo</text><text class="city" x="230" y="299">L'Aquila</text><text class="city" x="84" y="288">erbo</text><text class="city" x="115" y="381">Roma</text><text class="city" x="216" y="427">Frosinone</text><text class="city" x="380" y="442">Campobasso</text><text class="city" x="520" y="459">Foggia</text><text class="city" x="701" y="521">Bari</text><text class="city" x="351" y="565">Napoli</text><text class="city" x="548" y="602">Potenza</text><text class="city" x="659" y="598">Matera</text><text class="city" x="742" y="634">Taranto</text><text class="city" x="645" y="900">Catanzaro</text>
<!-- INGV logo -->
<circle cx="132" cy="78" r="30" fill="url(#gb)"/>
<g clip-path="url(#globe)">
<path d="M133 48A30 30 0 0 1 133 108Z" fill="#c9bfce"/>
<path d="M133 46L162 46L150 62L137 62Z" fill="#1f9a3c"/>
<path d="M137 60L151 57L153 64L143 63Z" fill="#e0112b"/>
<path d="M133 62L145 66L142 74L133 75Z" fill="#f4e01a"/><path d="M137 63L152 64L150 68L143 72Z" fill="#1f9a3c"/>
<path d="M152 68L158 78L150 84L145 74Z" fill="#f4e01a"/><path d="M133 75L145 73L150 86L133 90Z" fill="#e0112b"/>
<path d="M133 91L151 88L156 100L148 110L133 110Z" fill="#12923a"/>
</g>
<g fill="none" stroke="#e8f4f8" stroke-width=".9"><path d="M133 48L133 107"/><path d="M104 70Q120 66 133 63L160 63"/><path d="M102 85Q118 90 133 91L152 88"/><path d="M117 52Q108 80 127 106"/><path d="M133 63Q118 72 124 90"/></g>
<text x="170" y="75" font-family="'Liberation Sans Narrow','Liberation Sans',sans-serif" font-weight="bold" font-size="12" fill="#444" textLength="88" lengthAdjust="spacingAndGlyphs">ISTITUTO NAZIONALE</text>
<text x="170" y="89" font-family="'Liberation Sans Narrow','Liberation Sans',sans-serif" font-weight="bold" font-size="12" fill="#444" textLength="136" lengthAdjust="spacingAndGlyphs">DI GEOFISICA E VOLCANOLOGIA</text>
<!-- star -->
<path d="M812 361L818 374L832 376L822 386L825 399L812 393L799 399L802 386L792 376L806 374Z" fill="#fff" stroke="#000" stroke-width="4.5" stroke-linejoin="miter"/>
<!-- scale -->
<rect x="166" y="932" width="160" height="6" fill="#000"/>
<rect x="198" y="933.5" width="32" height="3.5" fill="#fff"/><rect x="262" y="933.5" width="32" height="3.5" fill="#fff"/>
<path d="M166 938v4M198 938v2M230 938v2M262 938v2M294 938v2M326 938v4" stroke="#222" fill="none"/>
<text x="246" y="917" font-family="'Liberation Sans',sans-serif" font-size="29" text-anchor="middle" fill="#111">km</text>
<text x="166" y="966" class="ax">0</text><text x="326" y="966" class="ax">100</text>
<!-- haisentito logo -->
<circle cx="1095" cy="916" r="33" fill="#1a1a1a"/>
<circle cx="1095" cy="916" r="20" fill="none" stroke="#e30b20" stroke-width="5"/>
<circle cx="1095" cy="916" r="8.5" fill="#e30b20"/>
<path d="M1100 910L1127 901Q1130 900 1130 903L1130 930Q1130 934 1126 932L1100 922Z" fill="url(#cone)"/>
<circle cx="1143.500" cy="917" r="10.500" fill="#e30b20"/>
<text x="1143.500" y="922" font-family="'Liberation Sans',sans-serif" font-weight="bold" font-size="14" fill="#fff" text-anchor="middle">?</text>
<text font-family="'Liberation Sans',sans-serif" font-size="20" font-weight="bold" fill="#111"><textPath href="#arc" textLength="224" lengthAdjust="spacingAndGlyphs"><tspan fill="#d8121f">www.</tspan><tspan font-weight="normal" fill="#333">hai</tspan>sentito<tspan font-weight="normal" fill="#333">il</tspan>terremoto<tspan fill="#d8121f">.it</tspan></textPath></text>
</g>
<!-- frame -->
<rect x="73" y="26.500" width="1108" height="970.500" fill="none" stroke="#444"/>
<rect x="83" y="37" width="1088" height="950" fill="none" stroke="#444"/>
<g fill="#000">
<rect x="83" y="27" width="55" height="10"/><rect x="470" y="27" width="331" height="10"/><rect x="1133" y="27" width="38" height="10"/>
<rect x="83" y="987" width="55" height="10"/><rect x="470" y="987" width="331" height="10"/><rect x="1133" y="987" width="38" height="10"/>
<rect x="73" y="276" width="10" height="440"/><rect x="1171" y="276" width="10" height="440"/>
</g>
<!-- axis labels -->
<text class="ax" x="138" y="17">12°30'</text><text class="ax" x="470" y="17">15°00'</text><text class="ax" x="802" y="17">17°30'</text><text class="ax" x="1134" y="17">20°00'</text>
<text class="ax" x="138" y="1023">12°30'</text><text class="ax" x="470" y="1023">15°00'</text><text class="ax" x="802" y="1023">17°30'</text><text class="ax" x="1134" y="1023">20°00'</text>
<text class="ax" x="31" y="284">42°30'</text><text class="ax" x="1222" y="284">42°30'</text>
<text class="ax" x="31" y="724">40°00'</text><text class="ax" x="1222" y="724">40°00'</text>
<!-- info box -->
<rect x="764.500" y="46.500" width="389" height="61.500" fill="#fff" stroke="#000"/>
<text class="info" x="769" y="60" textLength="367" lengthAdjust="spacingAndGlyphs">Terremoto del 23-02-2024 10:23:19 (ora locale) ML=4.7 Prof=16 km</text>
<text class="info" x="769" y="75" textLength="372" lengthAdjust="spacingAndGlyphs">Mappa preliminare delle intensità macrosismiche stimate nei comuni</text>
<text class="info" x="769" y="90" textLength="384" lengthAdjust="spacingAndGlyphs">Dati non verificati estratti da 1600 questionari compilati tramite Internet.</text>
<text class="info" x="769" y="105" textLength="290" lengthAdjust="spacingAndGlyphs">Ultimo aggiornamento: 14-12-2025 08:47 (ora locale)</text>
<!-- legend -->
<rect x="1050.500" y="171.500" width="103" height="601" fill="#fff" stroke="#000"/>
<text class="lb" x="1101" y="188">Scala</text><text class="lb" x="1102" y="204">Mercalli</text><text class="lb" x="1102" y="220">(MCS)</text>
<g>
<rect class="sw" x="1073" y="230" width="56.500" height="18.500" fill="#a0a0a0"/>
<rect class="sw" x="1073" y="254" width="56.500" height="18.500" fill="#4f68ae"/>
<rect x="1072" y="277" width="58" height="20" fill="#0033bb"/>
<rect class="sw" x="1073" y="302" width="56.500" height="18.500" fill="#0066cc"/>
<rect class="sw" x="1073" y="326" width="56.500" height="18.500" fill="#0099e6"/>
<rect class="sw" x="1073" y="350" width="56.500" height="18.500" fill="#00cc66"/>
<rect class="sw" x="1073" y="374" width="56.500" height="18.500" fill="#00ff00"/>
<rect class="sw" x="1073" y="398" width="56.500" height="18.500" fill="#bfff00"/>
<rect class="sw" x="1074" y="423" width="56.500" height="18.500" fill="#fff500"/>
<rect class="sw" x="1074" y="447" width="56.500" height="18.500" fill="#ffcc00"/>
<rect class="sw" x="1074" y="471" width="56.500" height="18.500" fill="#ffaa00"/>
<rect class="sw" x="1074" y="495" width="56.500" height="18.500" fill="#ff6f00"/>
<rect class="sw" x="1074" y="519" width="56.500" height="18.500" fill="#ff0000"/>
</g>
<g class="lb">
<text class="lb" x="1101.500" y="243" style="fill:#eee">n.a.*</text>
<text class="lb" x="1101.500" y="267" style="fill:#eee">II</text>
<text class="lb" x="1101.500" y="291" style="fill:#eee">III</text>
<text class="lb" x="1101.500" y="315" style="fill:#eee">III-IV</text>
<text class="lb" x="1101.500" y="339" style="fill:#eee">IV</text>
<text class="lb" x="1101.500" y="363" style="fill:#111">IV-V</text>
<text class="lb" x="1101.500" y="387" style="fill:#111">V</text>
<text class="lb" x="1101.500" y="411" style="fill:#111">V-VI</text>
<text class="lb" x="1102.500" y="436" style="fill:#111">VI</text>
<text class="lb" x="1102.500" y="460" style="fill:#111">VI-VII</text>
<text class="lb" x="1102.500" y="484" style="fill:#111">VII</text>
<text class="lb" x="1102.500" y="508" style="fill:#111">VII-VIII</text>
<text class="lb" x="1102.500" y="532" style="fill:#111">VIII</text>
</g>
<text class="lr" x="1104" y="557">*non avvertito</text>
<path d="M1054 569.500H1152M1054 692.500H1151" stroke="#000" stroke-dasharray="2.500 2" fill="none"/>
<text class="lb" x="1102" y="586">Numero</text><text class="lb" x="1101" y="606">questionari</text>
<g fill="none" stroke="#000" stroke-width="1.800">
<circle cx="1076.500" cy="623.500" r="3.500"/><circle cx="1124.500" cy="622.500" r="5"/><circle cx="1077" cy="658" r="8"/><circle cx="1125" cy="657" r="10.500"/>
</g>
<text class="lr" x="1076" y="642">1-2</text><text class="lr" x="1125" y="642">3-9</text><text class="lr" x="1077" y="681">10-49</text><text class="lr" x="1127" y="682">⩾50</text>
<text class="lb" x="1104" y="713">Epicentro</text><text class="lb" x="1105" y="729">Strumentale</text>
<path d="M1104 742L1106.500 748L1113 749L1108.500 753L1110 759.500L1104 756L1098 759.500L1099.500 753L1095 749L1101.500 748Z" fill="#fff" stroke="#000" stroke-width="1"/>
</svg>
</body></html>
